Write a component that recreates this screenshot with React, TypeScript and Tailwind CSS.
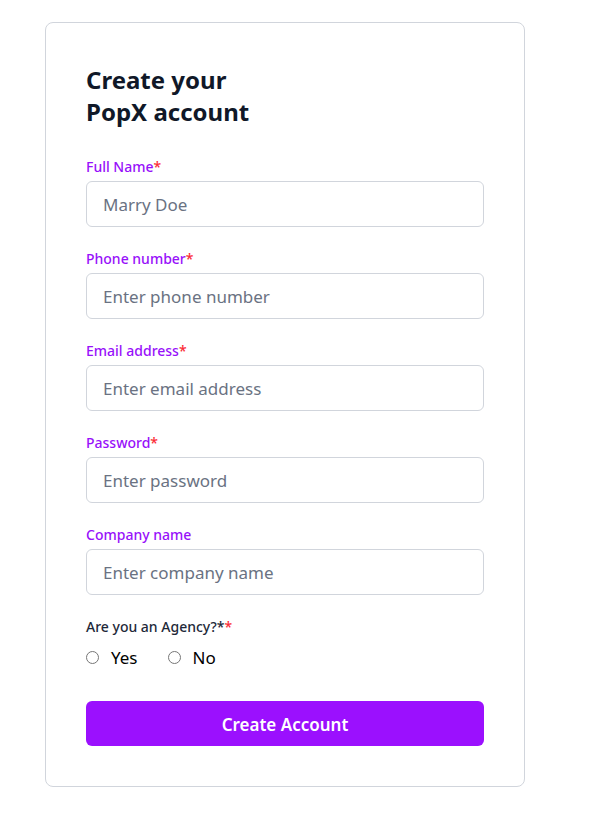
import { useState } from 'react';

const fields = [
  { label: 'Full Name', required: true, placeholder: 'Marry Doe', type: 'text' },
  { label: 'Phone number', required: true, placeholder: 'Enter phone number', type: 'tel' },
  { label: 'Email address', required: true, placeholder: 'Enter email address', type: 'email' },
  { label: 'Password', required: true, placeholder: 'Enter password', type: 'password' },
  { label: 'Company name', required: false, placeholder: 'Enter company name', type: 'text' },
];

export default function App() {
  const [agency, setAgency] = useState('');

  return (
    <div className="min-h-screen bg-white pt-[22px] pl-[45px] font-['Segoe_UI','Noto_Sans',sans-serif]">
      <div className="w-[480px] rounded-lg border border-gray-300 bg-white px-10 pt-[41px] pb-10">
        <h1 className="mb-[29px] text-2xl font-bold leading-8 text-gray-900">
          Create your
          <br />
          PopX account
        </h1>

        <form className="flex flex-col gap-[22px]" onSubmit={(e) => e.preventDefault()}>
          {fields.map((f) => (
            <div key={f.label}>
              <label className="mb-1 block text-sm font-medium leading-5 text-[#9810fa]">
                {f.label}
                {f.required && <span className="text-red-500">*</span>}
              </label>
              <input
                type={f.type}
                placeholder={f.placeholder}
                className="h-[46px] w-full rounded-md border border-gray-300 px-4 text-[17px] text-gray-900 placeholder:text-gray-500 focus:outline-none"
              />
            </div>
          ))}

          <div>
            <p className="text-sm font-medium leading-5 text-gray-800">
              Are you an Agency?*<span className="text-red-500">*</span>
            </p>
            <div className="mt-2 flex items-center gap-[30px] text-[17px] text-black">
              <label className="flex items-center gap-3">
                <input
                  type="radio"
                  name="agency"
                  checked={agency === 'yes'}
                  onChange={() => setAgency('yes')}
                  className="m-0 h-[13px] w-[13px]"
                />
                Yes
              </label>
              <label className="flex items-center gap-3">
                <input
                  type="radio"
                  name="agency"
                  checked={agency === 'no'}
                  onChange={() => setAgency('no')}
                  className="m-0 h-[13px] w-[13px]"
                />
                No
              </label>
            </div>
          </div>

          <button
            type="submit"
            className="mt-2 h-[45px] w-full rounded-md bg-[#9b10fe] pt-[3px] text-[17px] font-semibold text-white"
          >
            Create Account
          </button>
        </form>
      </div>
    </div>
  );
}
